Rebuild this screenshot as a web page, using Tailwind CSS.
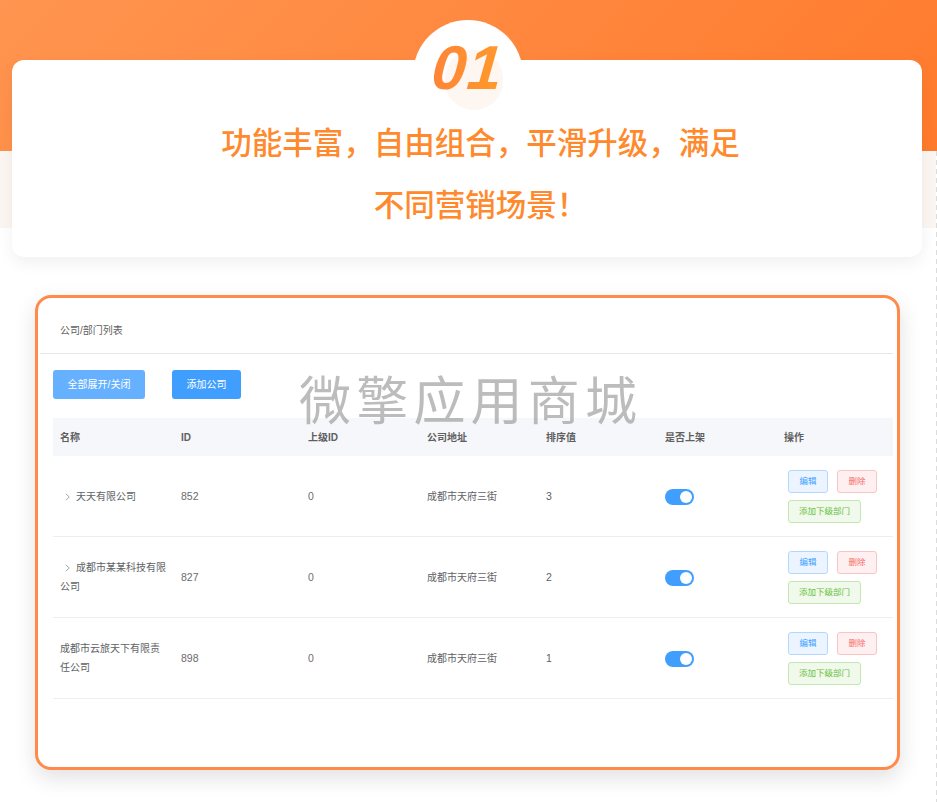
<!DOCTYPE html>
<html lang="zh">
<head>
<meta charset="utf-8">
<script src="https://cdn.jsdelivr.net/npm/@tailwindcss/browser@4"></script>
</head>
<body class="bg-white">
<div class="relative w-[937px] h-[802px] overflow-hidden bg-white font-['Liberation_Sans','Noto_Sans_CJK_SC',sans-serif]">
  <!-- backdrop -->
  <div class="absolute left-0 top-0 w-full h-[151px] bg-[linear-gradient(135deg,#ff9550,#ff7a2c)]"></div>
  <div class="absolute left-0 top-[151px] w-[936px] h-[77px] bg-[#fcf6f3]"></div>
  <div class="absolute right-0 top-[151px] bottom-0 w-px bg-[repeating-linear-gradient(to_bottom,#dcdcdc_0,#dcdcdc_5px,transparent_5px,transparent_9px)]"></div>

  <div class="relative pl-[12px] pt-[60px]">
    <!-- headline card -->
    <div class="relative w-[910px] h-[197px] rounded-[12px] bg-white shadow-[0_6px_16px_rgba(0,0,0,0.06)] flex flex-col items-center pt-[60px] pl-[27px]">
      <div class="absolute left-[401px] top-[-40px] w-[110px] h-[110px] rounded-full bg-white"></div>
      <div class="absolute left-[433px] top-[-10px] w-[58px] h-[60px] rounded-full bg-[#fdf6f1]"></div>
      <div class="absolute left-[420px] top-[-27px] h-[70px] text-[62px] leading-[70px] font-bold italic tracking-[1px] -skew-x-[5deg] bg-gradient-to-r from-[#ff8437] to-[#ff9a2a] bg-clip-text text-transparent font-['Liberation_Sans',sans-serif]">01</div>
      <p class="relative text-[30.5px] leading-[46px] font-medium text-[#ff8a2e] text-center">功能丰富，自由组合，平滑升级，满足</p>
      <p class="relative mt-[16px] text-[30.5px] leading-[46px] font-medium text-[#ff8a2e] text-center">不同营销场景！</p>
    </div>

    <!-- list card -->
    <div class="mt-[38px] ml-[23px] w-[865px] h-[475px] rounded-[16px] border-[3px] border-[#ff8a4a] bg-white shadow-[0_8px_22px_rgba(0,0,0,0.12)] pt-[2px] text-[#606266]">
      <div class="ml-[2px] mr-[4px] h-[54px] border-b border-[#e6e6e6] pl-[20px] flex items-center text-[10px] text-[#5f5f5f] pt-[8px]">公司/部门列表</div>
      <div class="pl-[15px] pr-[4px] pt-[16px]">
        <div class="flex gap-[27px]">
          <button class="w-[92px] h-[29px] rounded-[3px] bg-[#66b1ff] text-white text-[10px]">全部展开/关闭</button>
          <button class="w-[69px] h-[29px] rounded-[3px] bg-[#409eff] text-white text-[10px]">添加公司</button>
        </div>
        <!-- table -->
        <div class="mt-[19px] text-[10px]">
          <div class="grid grid-cols-[121px_127px_119px_119px_119px_119px_116px] h-[38px] items-center bg-[#f5f7fa] font-bold text-[#5f5f5f]">
            <div class="pl-[7px]">名称</div><div class="pl-[7px]">ID</div><div class="pl-[7px]">上级ID</div><div class="pl-[7px]">公司地址</div><div class="pl-[7px]">排序值</div><div class="pl-[7px]">是否上架</div><div class="pl-[7px]">操作</div>
          </div>

          <div class="grid grid-cols-[121px_127px_119px_119px_119px_119px_116px] h-[81px] items-center border-b border-[#ebeef5]">
            <div class="pl-[7px] pr-[7px] leading-[19px]"><svg class="inline-block w-[7px] h-[8px] ml-[4px] mr-[5px] align-[-1px]" viewBox="0 0 7 8" fill="none" stroke="#8a8a8a" stroke-width="0.8"><path d="M2 0.8L5.2 4L2 7.2"/></svg>天天有限公司</div>
            <div class="pl-[7px] pt-[2px] text-[10.5px] text-[#6b6b6b]">852</div>
            <div class="pl-[7px] pt-[2px] text-[10.5px] text-[#7a6a6a]">0</div>
            <div class="pl-[7px]">成都市天府三街</div>
            <div class="pl-[7px] pt-[2px] text-[10.5px]">3</div>
            <div class="pl-[7px] pt-[2px]"><div class="relative w-[29px] h-[16px] rounded-full bg-[#409eff]"><span class="absolute right-[2px] top-[2px] w-[12px] h-[12px] rounded-full bg-white"></span></div></div>
            <div class="pl-[11px] pt-px flex flex-wrap gap-x-[9px] gap-y-[7px] text-[8.5px]">
              <span class="w-[40px] h-[23px] flex items-center justify-center rounded-[3px] border border-[#b3d8ff] bg-[#ecf5ff] text-[#409eff]">编辑</span>
              <span class="w-[40px] h-[23px] flex items-center justify-center rounded-[3px] border border-[#fbc4c4] bg-[#fef0f0] text-[#f56c6c]">删除</span>
              <span class="w-[73px] h-[23px] flex items-center justify-center rounded-[3px] border border-[#c2e7b0] bg-[#f0f9eb] text-[#67c23a]">添加下级部门</span>
            </div>
          </div>

          <div class="grid grid-cols-[121px_127px_119px_119px_119px_119px_116px] h-[81px] items-center border-b border-[#ebeef5]">
            <div class="pl-[7px] pr-[7px] leading-[19px]"><svg class="inline-block w-[7px] h-[8px] ml-[4px] mr-[5px] align-[-1px]" viewBox="0 0 7 8" fill="none" stroke="#8a8a8a" stroke-width="0.8"><path d="M2 0.8L5.2 4L2 7.2"/></svg>成都市某某科技有限公司</div>
            <div class="pl-[7px] pt-[2px] text-[10.5px] text-[#6b6b6b]">827</div>
            <div class="pl-[7px] pt-[2px] text-[10.5px] text-[#7a6a6a]">0</div>
            <div class="pl-[7px]">成都市天府三街</div>
            <div class="pl-[7px] pt-[2px] text-[10.5px]">2</div>
            <div class="pl-[7px] pt-[2px]"><div class="relative w-[29px] h-[16px] rounded-full bg-[#409eff]"><span class="absolute right-[2px] top-[2px] w-[12px] h-[12px] rounded-full bg-white"></span></div></div>
            <div class="pl-[11px] pt-px flex flex-wrap gap-x-[9px] gap-y-[7px] text-[8.5px]">
              <span class="w-[40px] h-[23px] flex items-center justify-center rounded-[3px] border border-[#b3d8ff] bg-[#ecf5ff] text-[#409eff]">编辑</span>
              <span class="w-[40px] h-[23px] flex items-center justify-center rounded-[3px] border border-[#fbc4c4] bg-[#fef0f0] text-[#f56c6c]">删除</span>
              <span class="w-[73px] h-[23px] flex items-center justify-center rounded-[3px] border border-[#c2e7b0] bg-[#f0f9eb] text-[#67c23a]">添加下级部门</span>
            </div>
          </div>

          <div class="grid grid-cols-[121px_127px_119px_119px_119px_119px_116px] h-[81px] items-center border-b border-[#ebeef5]">
            <div class="pl-[7px] pr-[7px] leading-[19px]">成都市云旅天下有限责任公司</div>
            <div class="pl-[7px] pt-[2px] text-[10.5px] text-[#6b6b6b]">898</div>
            <div class="pl-[7px] pt-[2px] text-[10.5px] text-[#7a6a6a]">0</div>
            <div class="pl-[7px]">成都市天府三街</div>
            <div class="pl-[7px] pt-[2px] text-[10.5px]">1</div>
            <div class="pl-[7px] pt-[2px]"><div class="relative w-[29px] h-[16px] rounded-full bg-[#409eff]"><span class="absolute right-[2px] top-[2px] w-[12px] h-[12px] rounded-full bg-white"></span></div></div>
            <div class="pl-[11px] pt-px flex flex-wrap gap-x-[9px] gap-y-[7px] text-[8.5px]">
              <span class="w-[40px] h-[23px] flex items-center justify-center rounded-[3px] border border-[#b3d8ff] bg-[#ecf5ff] text-[#409eff]">编辑</span>
              <span class="w-[40px] h-[23px] flex items-center justify-center rounded-[3px] border border-[#fbc4c4] bg-[#fef0f0] text-[#f56c6c]">删除</span>
              <span class="w-[73px] h-[23px] flex items-center justify-center rounded-[3px] border border-[#c2e7b0] bg-[#f0f9eb] text-[#67c23a]">添加下级部门</span>
            </div>
          </div>
        </div>
      </div>
    </div>
  </div>

  <!-- watermark -->
  <div class="absolute left-[299px] top-[366px] text-[52px] leading-[72px] tracking-[5.2px] font-normal text-[#8f8f8f]/60 whitespace-nowrap">微擎应用商城</div>
</div>
</body>
</html>
